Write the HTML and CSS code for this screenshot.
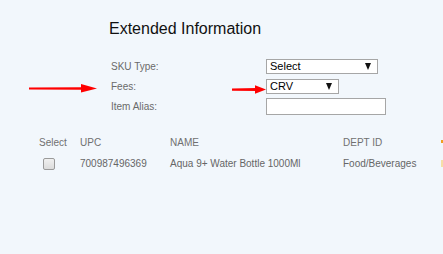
FILE: index.html
```html
<!DOCTYPE html>
<html lang="en">
<head>
    <meta charset="UTF-8">
    <title>Extended Information</title>
    <link rel="stylesheet" href="styles.css">
</head>
<body>
    <div class="page">
        <h2 class="title">Extended Information</h2>

        <div class="form">
            <div class="row">
                <label>SKU Type:</label>
                <div class="select wide"><span>Select</span><i class="caret"></i></div>
            </div>
            <div class="row">
                <label>Fees:</label>
                <div class="select short"><span>CRV</span><i class="caret"></i></div>
            </div>
            <div class="row">
                <label>Item Alias:</label>
                <input class="text-input" type="text">
            </div>
        </div>

        <div class="items">
            <div class="cell head">Select</div>
            <div class="cell head">UPC</div>
            <div class="cell head">NAME</div>
            <div class="cell head">DEPT ID</div>
            <div class="cell head"><span class="edge-mark"></span></div>

            <div class="cell"><span class="check"></span></div>
            <div class="cell">700987496369</div>
            <div class="cell">Aqua 9+ Water Bottle 1000Ml</div>
            <div class="cell">Food/Beverages</div>
            <div class="cell"><span class="tag"></span></div>
        </div>

        <!-- annotation arrows -->
        <svg class="arrow arrow-left" width="70" height="10" viewBox="0 0 70 10">
            <path d="M0 3.6 L54 3.2 L54 5.8 L0 5.6 Z" fill="#f00"/>
            <path d="M52 0 L68 4.5 L52 8.5 Z" fill="#f00"/>
        </svg>
        <svg class="arrow arrow-right" width="36" height="10" viewBox="0 0 36 10">
            <path d="M0 3.4 L25 3 L25 6 L0 5.8 Z" fill="#f00"/>
            <path d="M23 0.3 L34 4.6 L23 8.8 Z" fill="#f00"/>
        </svg>
    </div>
</body>
</html>
```

FILE: styles.css
```css
html, body {
    margin: 0;
    height: 100%;
}
body {
    font-family: 'Liberation Sans', Arial, sans-serif;
    background-color: #f2f7fc;
    overflow: hidden;
}
.page {
    position: relative;
    height: 100%;
}
.title {
    margin: 0;
    padding: 19px 0 0 109px;
    font-size: 16px;
    line-height: 20px;
    font-weight: normal;
    color: #111;
}
.form {
    margin-top: 17px;
    padding-left: 111px;
}
.row {
    display: flex;
    align-items: center;
    height: 20px;
}
.row label {
    width: 155px;
    font-size: 10px;
    color: #6a6a6a;
}
.select {
    box-sizing: border-box;
    height: 15px;
    display: flex;
    align-items: center;
    justify-content: space-between;
    padding: 0 6px 0 3px;
    background: #fff;
    border: 1px solid #a6a6a6;
    font-size: 11px;
    color: #000;
}
.select.wide { width: 112px; }
.select.short { width: 73px; }
.caret {
    width: 0;
    height: 0;
    border-left: 3.5px solid transparent;
    border-right: 3.5px solid transparent;
    border-top: 7px solid #111;
}
.text-input {
    box-sizing: border-box;
    width: 120px;
    height: 17px;
    margin: 0;
    padding: 0 3px;
    background: #fff;
    border: 1px solid #a6a6a6;
    border-radius: 0;
    outline: none;
}
.items {
    display: grid;
    grid-template-columns: 41px 90px 173px 98px 2px;
    grid-auto-rows: 20px;
    row-gap: 1px;
    margin-top: 16px;
    padding-left: 39px;
}
.cell {
    display: flex;
    align-items: center;
    font-size: 10px;
    color: #666;
    white-space: nowrap;
}
.cell.head {
    color: #707070;
}
.check {
    box-sizing: border-box;
    width: 12px;
    height: 12px;
    margin: 2px 0 0 4px;
    border: 1px solid #9a9a9a;
    border-radius: 2px;
    background: linear-gradient(#f0f0f0, #dcdcdc);
}
.edge-mark {
    width: 2px;
    height: 3px;
    margin-bottom: 2px;
    background: #f0a020;
}
.tag {
    width: 2px;
    height: 7px;
    margin-top: 1px;
    background: #f6dfa8;
}
.arrow {
    position: absolute;
}
.arrow-left {
    left: 29px;
    top: 84px;
}
.arrow-right {
    left: 232px;
    top: 85px;
}
```
